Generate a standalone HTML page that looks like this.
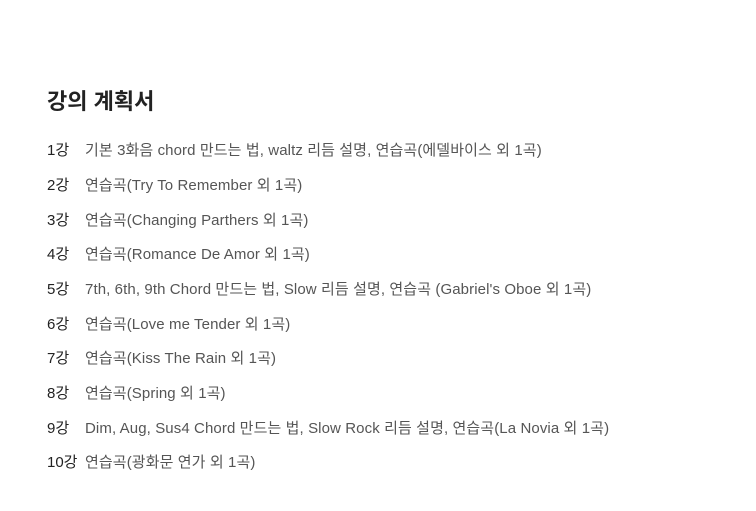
<!DOCTYPE html>
<html><head><meta charset="utf-8"><style>
body{margin:0;background:#fff;font-family:"Liberation Sans","Noto Sans CJK KR",sans-serif;}
h2{position:absolute;left:47px;top:88px;margin:0;font-size:22px;font-weight:bold;color:#222;line-height:28px;}
.r{position:absolute;left:47px;font-size:15px;line-height:20px;color:#555;white-space:nowrap;letter-spacing:0.1px;}
.r b{display:inline-block;width:38px;font-weight:normal;color:#222;letter-spacing:0;}
</style></head><body>
<h2>강의 계획서</h2>
<div class="r" style="top:141px"><b>1강</b>기본 3화음 chord 만드는 법, waltz 리듬 설명, 연습곡(에델바이스 외 1곡)</div>
<div class="r" style="top:176px"><b>2강</b>연습곡(Try To Remember 외 1곡)</div>
<div class="r" style="top:211px"><b>3강</b>연습곡(Changing Parthers 외 1곡)</div>
<div class="r" style="top:245px"><b>4강</b>연습곡(Romance De Amor 외 1곡)</div>
<div class="r" style="top:280px"><b>5강</b>7th, 6th, 9th Chord 만드는 법, Slow 리듬 설명, 연습곡 (Gabriel's Oboe 외 1곡)</div>
<div class="r" style="top:315px"><b>6강</b>연습곡(Love me Tender 외 1곡)</div>
<div class="r" style="top:349px"><b>7강</b>연습곡(Kiss The Rain 외 1곡)</div>
<div class="r" style="top:384px"><b>8강</b>연습곡(Spring 외 1곡)</div>
<div class="r" style="top:419px"><b>9강</b>Dim, Aug, Sus4 Chord 만드는 법, Slow Rock 리듬 설명, 연습곡(La Novia 외 1곡)</div>
<div class="r" style="top:453px"><b>10강</b>연습곡(광화문 연가 외 1곡)</div>
</body></html>
